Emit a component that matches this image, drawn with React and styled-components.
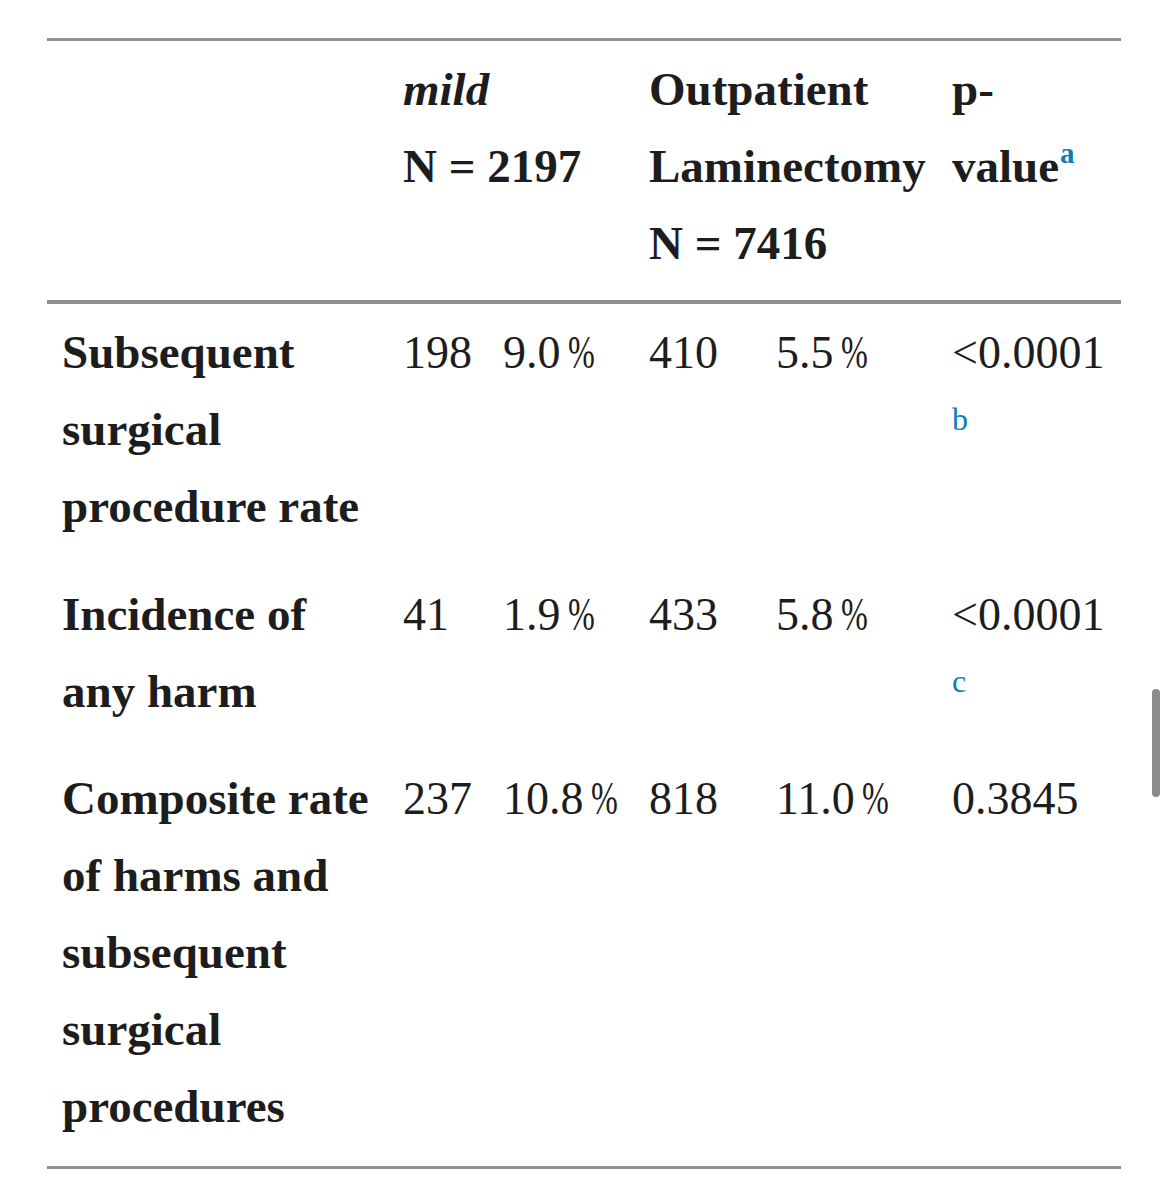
import React from 'react';
import styled, { createGlobalStyle } from 'styled-components';

// ============================================
// DATA
// ============================================

const rows = [
  {
    label: ['Subsequent', 'surgical', 'procedure rate'],
    mild: ['198', '9.0'],
    lam: ['410', '5.5'],
    p: '<0.0001',
    note: 'b',
  },
  {
    label: ['Incidence of', 'any harm'],
    mild: ['41', '1.9'],
    lam: ['433', '5.8'],
    p: '<0.0001',
    note: 'c',
  },
  {
    label: ['Composite rate', 'of harms and', 'subsequent', 'surgical', 'procedures'],
    mild: ['237', '10.8'],
    lam: ['818', '11.0'],
    p: '0.3845',
  },
];

// ============================================
// STYLED COMPONENTS
// ============================================

const GlobalStyle = createGlobalStyle`
  html, body {
    margin: 0;
    padding: 0;
    background: #fff;
  }
  body {
    font-family: "Liberation Serif", "Times New Roman", serif;
    color: #1d1d1d;
  }
`;

const Page = styled.div`
  position: relative;
  min-height: 1200px;
  padding: 38px 0 0 47px;
  box-sizing: border-box;
`;

const Table = styled.table`
  width: 1074px;
  table-layout: fixed;
  border-collapse: collapse;
  border-top: 3px solid #8f8f8f;
  border-bottom: 3px solid #8f8f8f;
`;

const HeadRow = styled.tr`
  border-bottom: 4px solid #8f8f8f;
`;

const Cell = styled.td`
  padding: 10px 15px ${(p) => (p.$head ? '18px' : '20.5px')};
  vertical-align: top;
  text-align: left;
  font-size: ${(p) => (p.$bold ? '47px' : '46px')};
  font-weight: ${(p) => (p.$bold ? 700 : 400)};
  line-height: 77px;
  white-space: nowrap;
`;

const HeadCell = styled(Cell).attrs({ as: 'th', $head: true })``;

const Line = styled.span`
  display: block;
  font-style: ${(p) => (p.$italic ? 'italic' : 'normal')};
`;

const Percent = styled.span`
  display: inline-block;
  margin-left: 7px;
  letter-spacing: -1px;
  transform: scaleX(0.7);
  transform-origin: left center;
`;

const Note = styled.sup`
  color: #0c7dbb;
  font-size: ${(p) => (p.$raise ? '29px' : '32px')};
  font-weight: ${(p) => (p.$raise ? 700 : 400)};
  line-height: 0;
  vertical-align: ${(p) => (p.$raise ? '19px' : '15px')};
  margin-left: ${(p) => (p.$raise ? '1px' : '0')};
`;

const ScrollThumb = styled.div`
  position: absolute;
  top: 689px;
  left: 1152px;
  width: 8px;
  height: 108px;
  border-radius: 4px;
  background: #8b8b8b;
`;

// ============================================
// COMPONENT
// ============================================

const Rate = ({ value }) => (
  <>
    {value}
    <Percent>%</Percent>
  </>
);

function App() {
  return (
    <>
      <GlobalStyle />
      <Page>
        <Table>
          <colgroup>
            <col style={{ width: 341 }} />
            <col style={{ width: 100 }} />
            <col style={{ width: 146 }} />
            <col style={{ width: 127 }} />
            <col style={{ width: 176 }} />
            <col style={{ width: 184 }} />
          </colgroup>
          <thead>
            <HeadRow>
              <HeadCell $bold />
              <HeadCell $bold colSpan={2}>
                <Line $italic>mild</Line>
                <Line>N = 2197</Line>
              </HeadCell>
              <HeadCell $bold colSpan={2}>
                <Line>Outpatient</Line>
                <Line>Laminectomy</Line>
                <Line>N = 7416</Line>
              </HeadCell>
              <HeadCell $bold>
                <Line>p-</Line>
                <Line>
                  value<Note $raise>a</Note>
                </Line>
              </HeadCell>
            </HeadRow>
          </thead>
          <tbody>
            {rows.map((row) => (
              <tr key={row.label.join(' ')}>
                <Cell $bold>
                  {row.label.map((l) => (
                    <Line key={l}>{l}</Line>
                  ))}
                </Cell>
                <Cell>{row.mild[0]}</Cell>
                <Cell>
                  <Rate value={row.mild[1]} />
                </Cell>
                <Cell>{row.lam[0]}</Cell>
                <Cell>
                  <Rate value={row.lam[1]} />
                </Cell>
                <Cell>
                  <Line>{row.p}</Line>
                  {row.note && (
                    <Line>
                      <Note>{row.note}</Note>
                    </Line>
                  )}
                </Cell>
              </tr>
            ))}
          </tbody>
        </Table>
        <ScrollThumb />
      </Page>
    </>
  );
}

export default App;
